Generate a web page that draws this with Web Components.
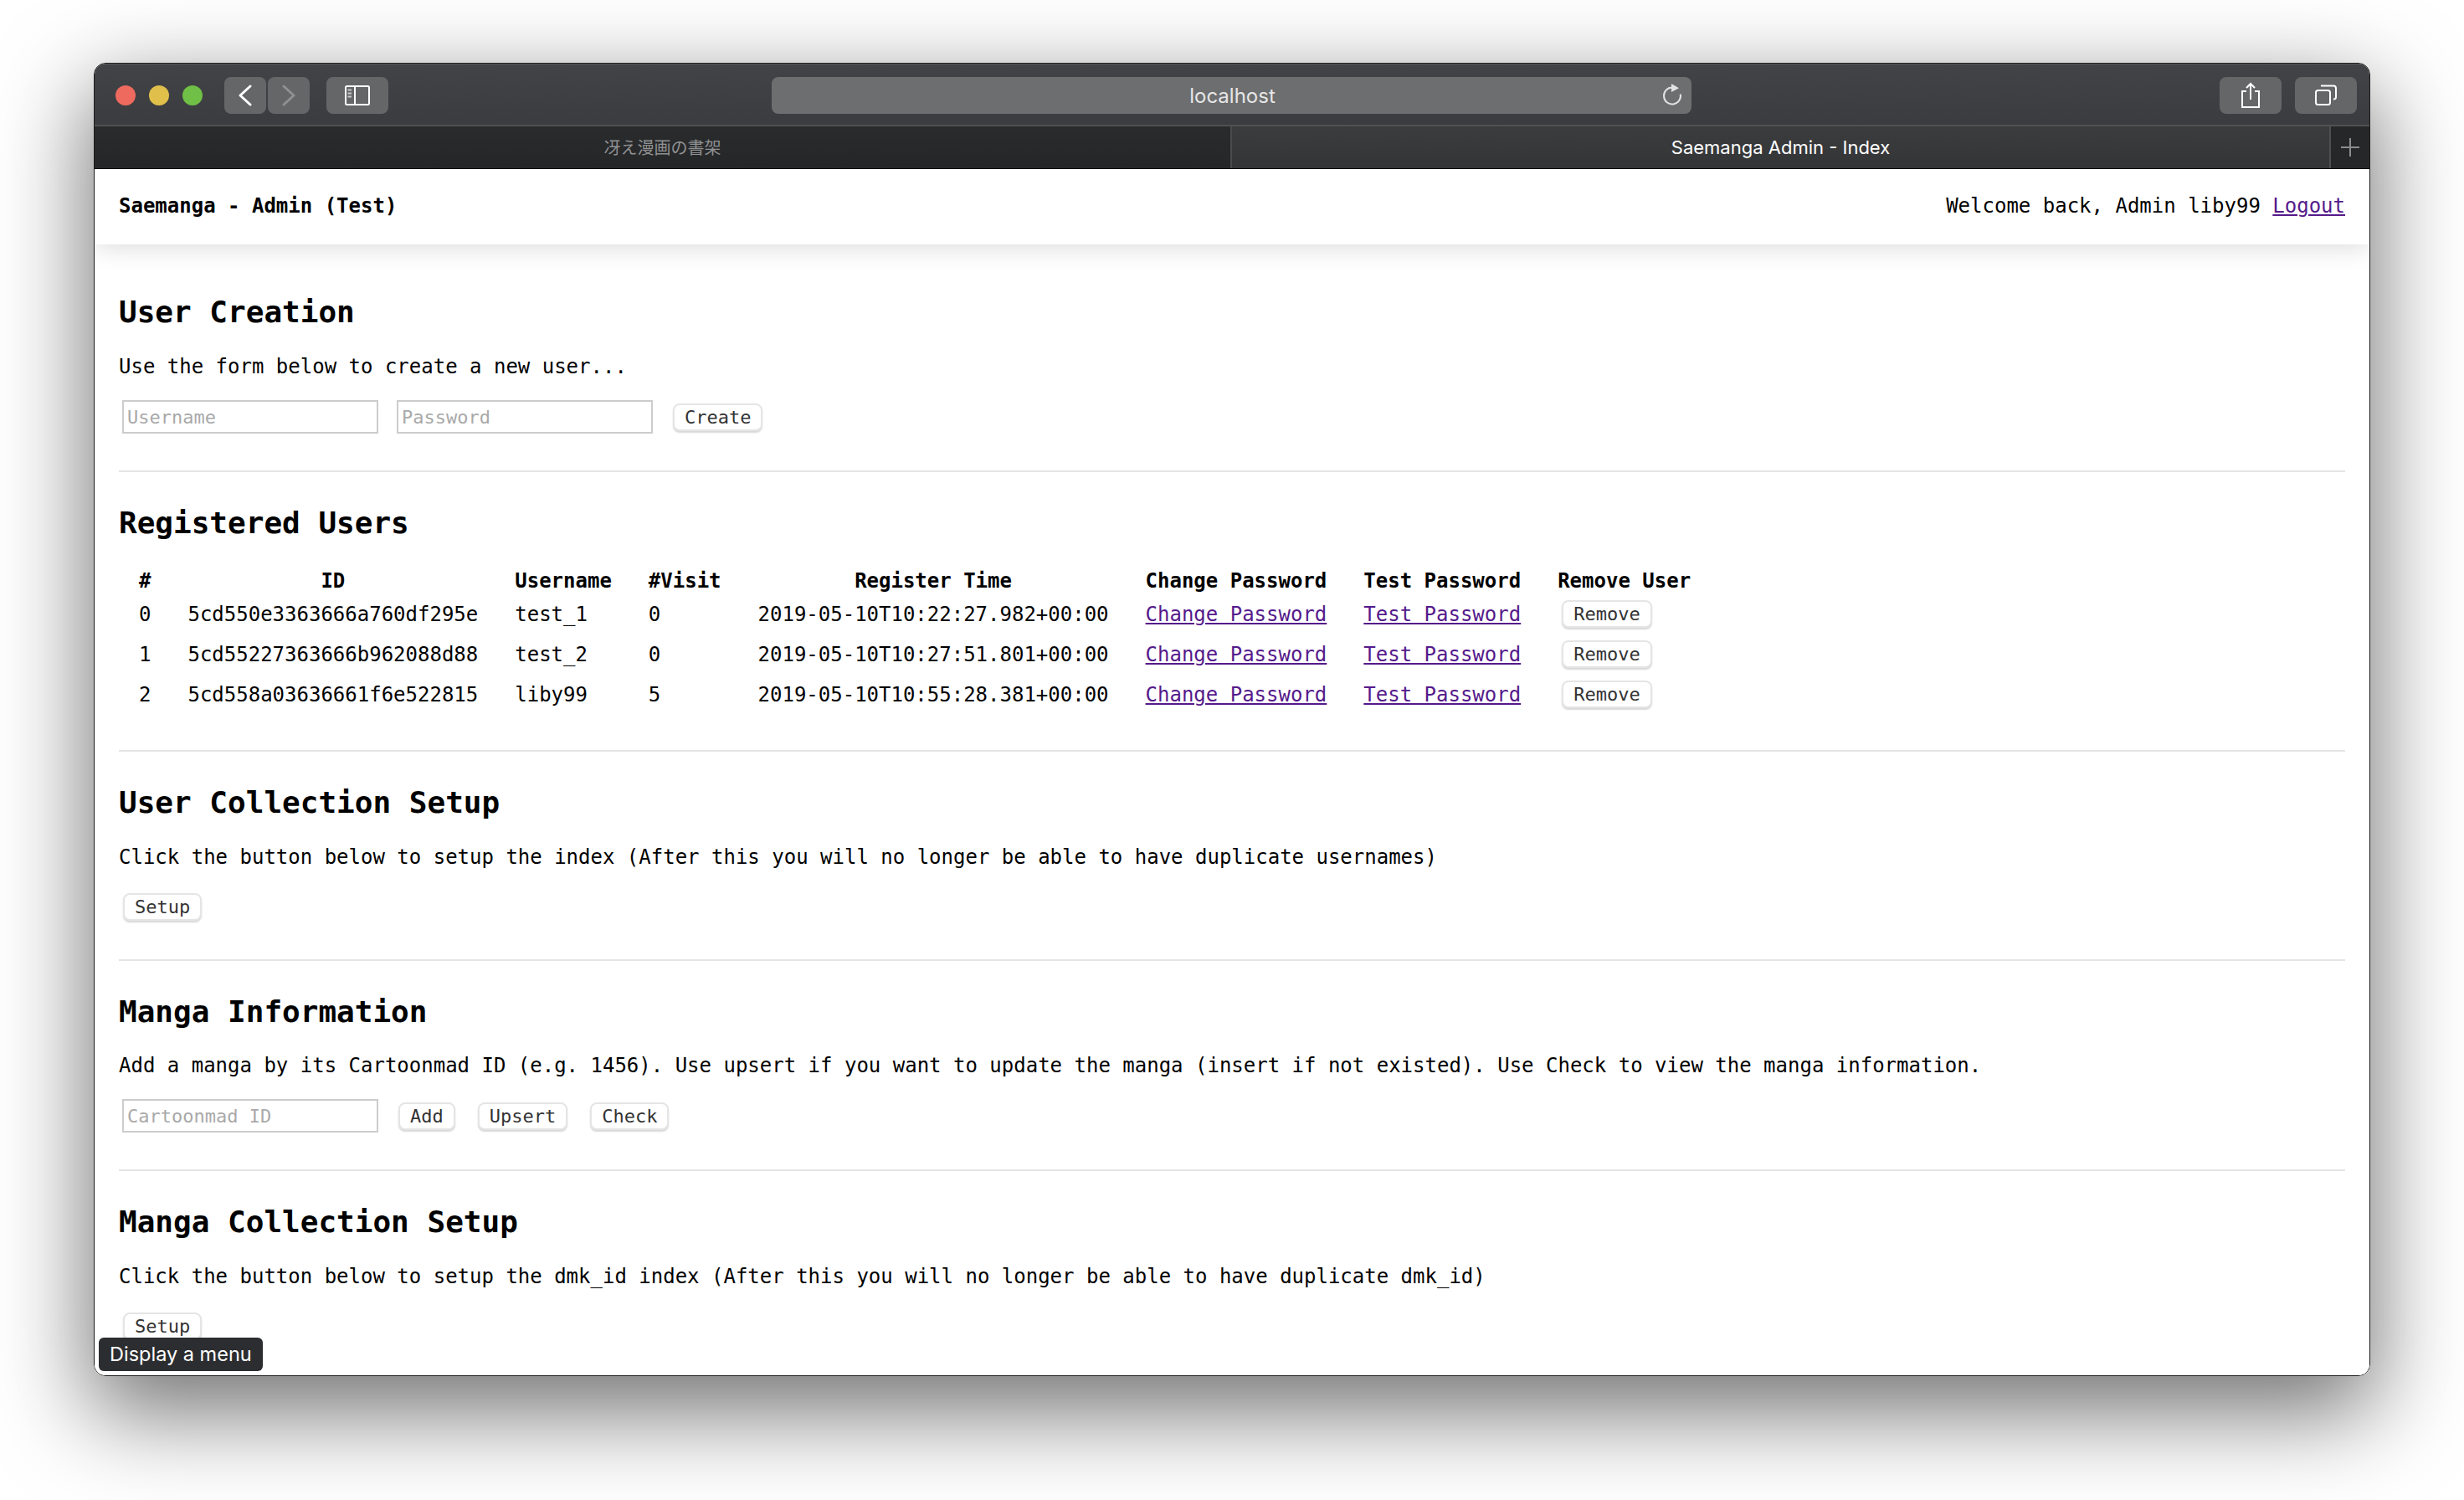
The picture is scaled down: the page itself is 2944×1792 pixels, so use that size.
<!DOCTYPE html>
<html>
<head>
<meta charset="utf-8">
<title>Saemanga Admin - Index</title>
<style>
html, body { margin: 0; padding: 0; background: #fff; }
body { width: 2944px; height: 1792px; overflow: hidden; }
</style>
</head>
<body>
<mac-window>
  <browser-toolbar slot="chrome" url="localhost"></browser-toolbar>
  <tab-strip slot="chrome"></tab-strip>
  <admin-nav>
    <span slot="brand">Saemanga - Admin (Test)</span>
    Welcome back, Admin liby99
  </admin-nav>
  <admin-page>
    <admin-section heading="User Creation">
      Use the form below to create a new user...
      <form-row slot="actions">
        <ui-input placeholder="Username"></ui-input>
        <ui-input placeholder="Password"></ui-input>
        <ui-button>Create</ui-button>
      </form-row>
    </admin-section>
    <admin-section heading="Registered Users" table>
      <user-table slot="actions"></user-table>
    </admin-section>
    <admin-section heading="User Collection Setup">
      Click the button below to setup the index (After this you will no longer be able to have duplicate usernames)
      <form-row slot="actions" single><ui-button>Setup</ui-button></form-row>
    </admin-section>
    <admin-section heading="Manga Information" tight>
      Add a manga by its Cartoonmad ID (e.g. 1456). Use upsert if you want to update the manga (insert if not existed). Use Check to view the manga information.
      <form-row slot="actions">
        <ui-input placeholder="Cartoonmad ID"></ui-input>
        <ui-button>Add</ui-button>
        <ui-button>Upsert</ui-button>
        <ui-button>Check</ui-button>
      </form-row>
    </admin-section>
    <admin-section heading="Manga Collection Setup">
      Click the button below to setup the dmk_id index (After this you will no longer be able to have duplicate dmk_id)
      <form-row slot="actions" single><ui-button>Setup</ui-button></form-row>
    </admin-section>
  </admin-page>
  <menu-tooltip slot="overlay">Display a menu</menu-tooltip>
</mac-window>

<script>
const MONO = '"DejaVu Sans Mono", "Liberation Mono", monospace'
const UI = 'Inter, "Noto Sans", "Noto Sans CJK JP", sans-serif'

customElements.define('mac-window', class extends HTMLElement {
  constructor () {
    super()
    this.attachShadow({ mode: 'open' }).innerHTML = `
<style>
:host { display: block; box-sizing: border-box; width: 2944px; height: 1792px; padding: 75px 112px 148px; }
.frame {
  position: relative;
  box-sizing: border-box;
  height: 1569px;
  display: flex;
  flex-direction: column;
  overflow: hidden;
  border: 1px solid #1c1c1c;
  border-radius: 14px;
  background: #fff;
}
.glow { border-radius: 14px; box-shadow: 0 38px 110px 6px rgba(0,0,0,.55); }
.body { flex: 1; min-height: 0; overflow: hidden; background: #fff; }
</style>
<div class="glow">
  <div class="frame">
    <slot name="chrome"></slot>
    <div class="body"><slot></slot></div>
    <slot name="overlay"></slot>
  </div>
</div>`
  }
})

customElements.define('browser-toolbar', class extends HTMLElement {
  constructor () {
    super()
    this.attachShadow({ mode: 'open' }).innerHTML = `
<style>
:host { display: block; }
.bar {
  box-sizing: border-box;
  height: 75px;
  display: flex;
  align-items: flex-start;
  padding: 15px 15px 0 25px;
  background: linear-gradient(#424346, #3b3c3f);
  border-top: 1px solid #5a5b5d;
  border-bottom: 2px solid #505153;
}
.lights { display: flex; gap: 16px; margin: 10px 26px 0 0; }
.lights i { width: 24px; height: 24px; border-radius: 50%; display: block; }
.btn {
  box-sizing: border-box;
  height: 44px;
  border-radius: 8px;
  background: #656668;
  display: flex;
  align-items: center;
  justify-content: center;
}
svg { display: block; fill: none; stroke: #fff; stroke-width: 2; }
.url {
  position: relative;
  box-sizing: border-box;
  width: 1099px;
  height: 44px;
  margin: 0 631px 0 458px;
  padding-left: 2px;
  border-radius: 8px;
  background: #6d6e70;
  color: #e6e6e6;
  font: 24px/46px ${UI};
  text-align: center;
}
.url svg { position: absolute; right: 10px; top: 8px; }
</style>
<div class="bar">
  <div class="lights">
    <i style="background:#ee6a5f"></i><i style="background:#e0bf4b"></i><i style="background:#70bf47"></i>
  </div>
  <div class="btn" style="width:50px;margin-right:2px">
    <svg width="16" height="26" viewBox="0 0 16 26" style="stroke-width:3;stroke-linecap:round;stroke-linejoin:round"><path d="M14 2 L2 13 L14 24"/></svg>
  </div>
  <div class="btn" style="width:50px;margin-right:20px">
    <svg width="16" height="26" viewBox="0 0 16 26" style="stroke:#8f9091;stroke-width:3;stroke-linecap:round;stroke-linejoin:round"><path d="M2 2 L14 13 L2 24"/></svg>
  </div>
  <div class="btn" style="width:74px">
    <svg width="30" height="24" viewBox="0 0 30 24"><rect x="1" y="1" width="28" height="22" rx="1.5"/><path d="M12 1 V23"/><path d="M3.5 5.5 H8 M3.5 9.5 H8 M3.5 13.5 H8" stroke="#c9c9ca"/></svg>
  </div>
  <div class="url">${this.getAttribute('url') || ''}
    <svg width="26" height="28" viewBox="0 0 26 28" style="stroke:#e2e2e2"><path d="M13 4.5 A10 10 0 1 0 22.8 12.5"/><path d="M12 0 L21 5.2 L12 10 Z" fill="#e2e2e2" stroke="none"/></svg>
  </div>
  <div class="btn" style="width:74px;margin-right:16px">
    <svg width="24" height="32" viewBox="0 0 24 32"><path d="M7 11 H2 V30 H22 V11 H17"/><path d="M12 21 V2 M7 7 L12 2 L17 7"/></svg>
  </div>
  <div class="btn" style="width:74px">
    <svg width="26" height="26" viewBox="0 0 26 26"><rect x="1" y="7" width="17" height="17" rx="2.5"/><path d="M7 1.5 H22 Q25 1.5 25 4.5 V15 Q25 17.5 22 17.5"/></svg>
  </div>
</div>`
  }
})

customElements.define('tab-strip', class extends HTMLElement {
  constructor () {
    super()
    this.attachShadow({ mode: 'open' }).innerHTML = `
<style>
:host { display: block; }
.tabs {
  height: 50px;
  display: flex;
  font: 22px/50px ${UI};
  text-align: center;
  border-bottom: 1px solid #000;
}
.tab { box-sizing: border-box; }
.off { width: 1357px; background: linear-gradient(#2a2b2d, #252628); color: #909192; font-size: 20px; }
.on { width: 1313px; background: linear-gradient(#3b3c3e, #343537); color: #fff; border-left: 2px solid #4a4b4d; }
.plus {
  flex: 1;
  background: #262729;
  border-left: 2px solid #4f5052;
  display: flex;
  align-items: center;
  justify-content: center;
}
svg { display: block; stroke: #8c8d8e; stroke-width: 2; }
</style>
<div class="tabs">
  <div class="tab off" lang="ja" style="font-family:'Noto Sans CJK JP',sans-serif">冴え漫画の書架</div>
  <div class="tab on">Saemanga Admin - Index</div>
  <div class="plus"><svg width="22" height="22" viewBox="0 0 22 22"><path d="M11 0 V22 M0 11 H22"/></svg></div>
</div>`
  }
})

customElements.define('admin-nav', class extends HTMLElement {
  constructor () {
    super()
    this.attachShadow({ mode: 'open' }).innerHTML = `
<style>
:host { display: block; position: relative; z-index: 1; }
nav {
  box-sizing: border-box;
  height: 90px;
  padding: 0 29px 2px 29px;
  display: flex;
  justify-content: space-between;
  align-items: center;
  font: 24px/32px ${MONO};
  color: #000;
  background: #fff;
  box-shadow: 0 4px 30px rgba(0,0,0,.14);
}
b { font-weight: 700; }
a { color: #551a8b; text-decoration: underline; }
</style>
<nav>
  <b><slot name="brand"></slot></b>
  <span><slot></slot> <a href="#">Logout</a></span>
</nav>`
  }
})

customElements.define('admin-page', class extends HTMLElement {
  constructor () {
    super()
    this.attachShadow({ mode: 'open' }).innerHTML = `
<style>
:host { display: block; padding: 59px 29px 0 29px; font: 24px/32px ${MONO}; color: #000; }
</style>
<slot></slot>`
  }
})

customElements.define('admin-section', class extends HTMLElement {
  constructor () {
    super()
    this.attachShadow({ mode: 'open' }).innerHTML = `
<style>
:host { display: block; margin-bottom: 39px; }
:host(:last-child) { margin-bottom: 0; }
h2 { margin: 0 0 27px; font: 700 36px/44px ${MONO}; }
p { margin: 0 0 24px; }
:host([tight]) h2 { margin-bottom: 26px; }
:host([table]) p { display: none; }
:host([table]) h2 { margin-bottom: 30px; }
hr { height: 2px; margin: 44px 0 0; border: 0; background: #e4e4e4; }
:host([table]) hr { margin-top: 42px; }
</style>
<h2>${this.getAttribute('heading')}</h2>
<p><slot></slot></p>
<slot name="actions"></slot>
<hr>`
  }
})

customElements.define('form-row', class extends HTMLElement {
  constructor () {
    super()
    this.attachShadow({ mode: 'open' }).innerHTML = `
<style>
:host { display: flex; align-items: center; padding-left: 4px; }
:host([single]) { padding-top: 3px; padding-bottom: 2px; }
</style>
<slot></slot>`
  }
})

customElements.define('ui-input', class extends HTMLElement {
  constructor () {
    super()
    this.attachShadow({ mode: 'open' }).innerHTML = `
<style>
:host { display: block; margin-right: 22px; }
input {
  display: block;
  box-sizing: border-box;
  width: 306px;
  height: 40px;
  padding: 0 4px;
  border: 2px solid #cccccc;
  border-radius: 0;
  outline: 0;
  font: 22px ${MONO};
}
input::placeholder { color: #a9a9a9; opacity: 1; }
</style>
<input type="text" placeholder="${this.getAttribute('placeholder')}">`
  }
})

customElements.define('ui-button', class extends HTMLElement {
  constructor () {
    super()
    this.attachShadow({ mode: 'open' }).innerHTML = `
<style>
:host { display: block; margin: 0 25px 0 2px; }
:host(:only-child) { margin-left: 1px; }
button {
  display: block;
  box-sizing: border-box;
  height: 33px;
  padding: 0 12px;
  border: 2px solid #e5e5e5;
  border-radius: 8px;
  background: #fff;
  color: #333;
  font: 22px/27px ${MONO};
  box-shadow: 0 2px 2px rgba(0,0,0,.16);
}
</style>
<button type="button"><slot></slot></button>`
  }
})

customElements.define('user-table', class extends HTMLElement {
  constructor () {
    super()
    const users = [
      ['0', '5cd550e3363666a760df295e', 'test_1', '0', '2019-05-10T10:22:27.982+00:00'],
      ['1', '5cd55227363666b962088d88', 'test_2', '0', '2019-05-10T10:27:51.801+00:00'],
      ['2', '5cd558a03636661f6e522815', 'liby99', '5', '2019-05-10T10:55:28.381+00:00']
    ]
    const head = ['#', 'ID', 'Username', '#Visit', 'Register Time', 'Change Password', 'Test Password', 'Remove User']
    const rows = users.map(user => `<tr>
      ${user.map(cell => `<td>${cell}</td>`).join('')}
      <td><a href="#">Change Password</a></td>
      <td><a href="#">Test Password</a></td>
      <td><ui-button>Remove</ui-button></td>
    </tr>`).join('')
    this.attachShadow({ mode: 'open' }).innerHTML = `
<style>
:host { display: block; padding-left: 2px; }
table { border-collapse: collapse; font: 24px/32px ${MONO}; }
th, td { padding: 0 22px; white-space: nowrap; }
th { height: 33px; font-weight: 700; text-align: center; vertical-align: middle; }
td { height: 48px; text-align: left; vertical-align: middle; }
a { color: #551a8b; text-decoration: underline; }
ui-button { margin: 0 0 2px 5px; width: max-content; }
</style>
<table>
  <thead><tr>${head.map(name => `<th>${name}</th>`).join('')}</tr></thead>
  <tbody>${rows}</tbody>
</table>`
  }
})

customElements.define('menu-tooltip', class extends HTMLElement {
  constructor () {
    super()
    this.attachShadow({ mode: 'open' }).innerHTML = `
<style>
:host {
  position: absolute;
  left: 5px;
  bottom: 5px;
  z-index: 2;
  height: 40px;
  padding: 0 13px;
  border-radius: 6px;
  background: #2c2d30;
  color: #fff;
  font: 23.5px/40px ${UI};
  white-space: nowrap;
}
</style>
<slot></slot>`
  }
})
</script>
</body>
</html>
